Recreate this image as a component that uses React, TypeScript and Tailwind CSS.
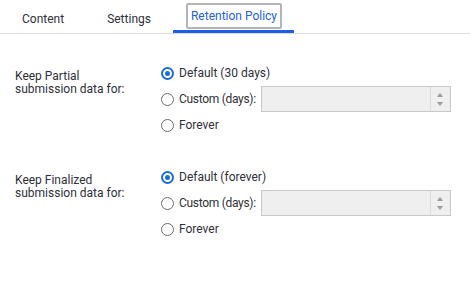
import React from "react";

function Radio({ checked }: { checked?: boolean }) {
  return (
    <span
      className={
        "flex h-[13px] w-[13px] shrink-0 items-center justify-center rounded-full border " +
        (checked ? "border-[#1a6be0] border-2" : "border-[#6b6b6b]")
      }
    >
      {checked && <span className="h-[5px] w-[5px] rounded-full bg-[#1a6be0]" />}
    </span>
  );
}

function NumberBox() {
  return (
    <div className="flex h-[26px] w-[190px] border border-[#c8c8c8] bg-[#efefef]">
      <div className="flex-1" />
      <div className="flex w-[20px] flex-col items-center justify-center gap-[5px] border-l border-[#dcdcdc]">
        <span className="h-0 w-0 border-x-[3px] border-b-[4px] border-x-transparent border-b-[#9a9a9a]" />
        <span className="h-0 w-0 border-x-[3px] border-t-[4px] border-x-transparent border-t-[#9a9a9a]" />
      </div>
    </div>
  );
}

function Section({ label, def }: { label: string[]; def: string }) {
  return (
    <div className="flex">
      <div className="w-[161px] pl-[15px] pt-[10px] leading-[13px]">
        {label.map((l) => (
          <div key={l}>{l}</div>
        ))}
      </div>
      <div className="flex flex-col">
        <label className="flex h-[26px] items-center gap-[5px]">
          <Radio checked />
          <span>{def}</span>
        </label>
        <label className="flex h-[26px] items-center gap-[5px]">
          <Radio />
          <span className="tracking-[-0.3px]">Custom (days):</span>
          <NumberBox />
        </label>
        <label className="flex h-[26px] items-center gap-[5px]">
          <Radio />
          <span>Forever</span>
        </label>
      </div>
    </div>
  );
}

export default function App() {
  return (
    <div className="h-[287px] w-[470px] bg-white text-[12px] text-[#2f2f38] font-['Roboto',sans-serif]">
      <div className="flex h-[34px] border-b border-[#dcdcdc] pl-[5px]">
        <div className="flex items-center pl-[17px] pr-[26px] pt-[4px]">Content</div>
        <div className="flex items-center pl-[17px] pr-[22px] pt-[4px]">Settings</div>
        <div className="flex items-center border-b-[3px] border-[#1a5fe6] pl-[13px] pr-[12px] pt-[2px]">
          <span className="rounded-[2px] border-2 border-[#b4b4b4] px-[3px] py-[2px] text-[#2160e8]">
            Retention Policy
          </span>
        </div>
      </div>
      <div className="flex flex-col gap-[26px] pt-[26px]">
        <Section label={["Keep Partial", "submission data for:"]} def="Default (30 days)" />
        <Section label={["Keep Finalized", "submission data for:"]} def="Default (forever)" />
      </div>
    </div>
  );
}
